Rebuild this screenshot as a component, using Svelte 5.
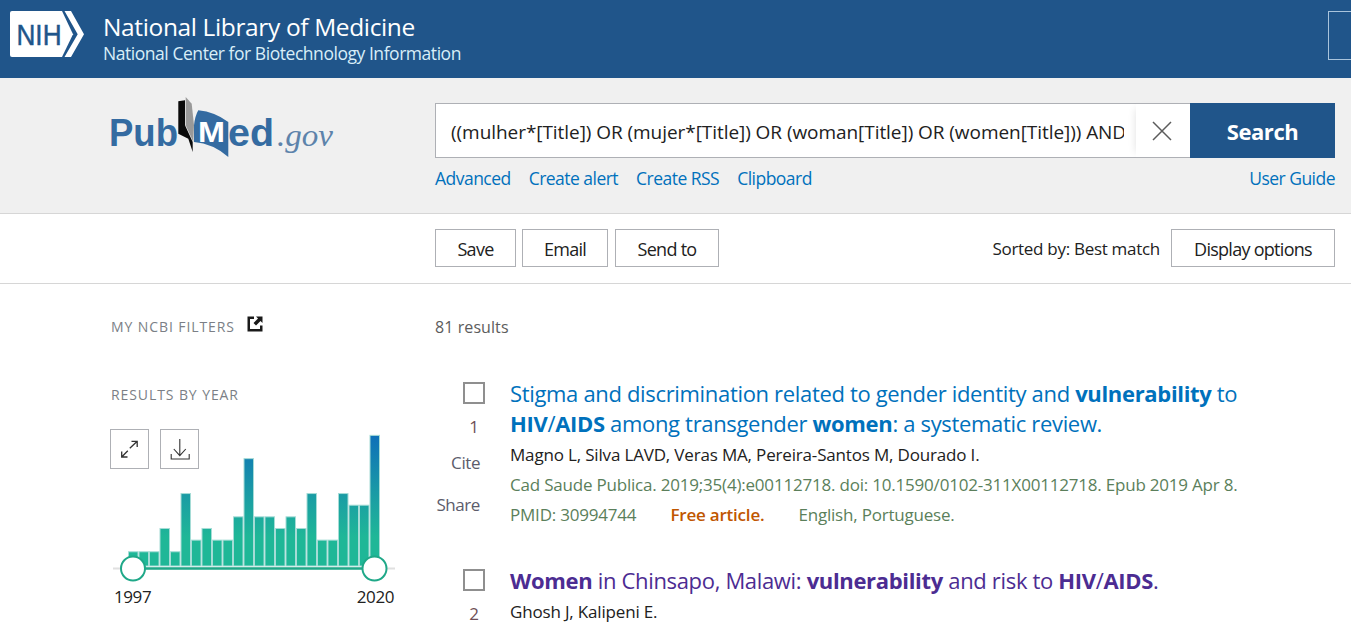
<script>
	const years = [1, 1, 1, 3, 1, 6, 2, 3, 2, 2, 4, 9, 4, 4, 3, 4, 3, 6, 2, 2, 6, 5, 5, 11];
	const baseY = 137;
	const barHeight = (n) => n * 11.64 + 2.6;

	const results = [
		{
			num: 1,
			visited: false,
			title: [
				['Stigma and discrimination related to gender identity and ', false],
				['vulnerability', true],
				[' to ', false],
				['HIV', true],
				['/', false],
				['AIDS', true],
				[' among transgender ', false],
				['women', true],
				[': a systematic review.', false]
			],
			authors: 'Magno L, Silva LAVD, Veras MA, Pereira-Santos M, Dourado I.',
			citation: 'Cad Saude Publica. 2019;35(4):e00112718. doi: 10.1590/0102-311X00112718. Epub 2019 Apr 8.',
			pmid: '30994744',
			free: true,
			lang: 'English, Portuguese.'
		},
		{
			num: 2,
			visited: true,
			title: [
				['Women', true],
				[' in Chinsapo, Malawi: ', false],
				['vulnerability', true],
				[' and risk to ', false],
				['HIV', true],
				['/', false],
				['AIDS', true],
				['.', false]
			],
			authors: 'Ghosh J, Kalipeni E.',
			citation: 'SAHARA J. 2005 Nov;2(3):320-32. doi: 10.1080/17290376.2005.9724857.'
		}
	];
</script>

<div class="page">
	<header class="ncbi">
		<svg class="nih" width="75" height="48" viewBox="0 0 75 48" aria-label="NIH">
			<path d="M2 1H52L63 24.300L52 47H2Q0 47 0 45V3Q0 1 2 1Z" fill="#fff" />
			<path d="M54.500 1H61L74 24.300L61 47H54.500L67.700 24.300Z" fill="#fff" />
			<text x="6.500" y="35" class="nih-text" textLength="45" lengthAdjust="spacingAndGlyphs">NIH</text>
		</svg>
		<div class="ncbi-names">
			<div class="nlm">National Library of Medicine</div>
			<div class="center">National Center for Biotechnology Information</div>
		</div>
		<div class="account"></div>
	</header>

	<section class="search-band">
		<svg class="logo" width="225" height="66" viewBox="0 0 225 66" aria-label="PubMed.gov">
			<text x="-1" y="50" class="logo-word" textLength="69" lengthAdjust="spacingAndGlyphs">Pub</text>
			<path d="M75.700 1L81.700 7.700L84 29.300L83.300 46L75.700 29.300Z" fill="#999" />
			<path d="M68.300 5.300L75 4.300V29.300L82.700 46V56L78.300 42.700L68.300 37.700Z" fill="#0a0a0a" />
			<path d="M84 29.300Q85 20 88.300 14.300Q105 16 118.300 26V61Q103.300 47.700 84 46Z" fill="#346ba1" />
			<text x="88" y="46" class="logo-m" textLength="27" lengthAdjust="spacingAndGlyphs">M</text>
			<text x="118" y="50" class="logo-word" textLength="46" lengthAdjust="spacingAndGlyphs">ed</text>
			<text x="167" y="50" class="logo-gov" textLength="56" lengthAdjust="spacingAndGlyphs">.gov</text>
		</svg>
		<div class="search-main">
			<div class="search-form">
				<div class="term">
					<div class="term-text">((mulher*[Title]) OR (mujer*[Title]) OR (woman[Title]) OR (women[Title])) AND (vulnerability[Title])</div>
				</div>
				<div class="clear">
					<svg width="20" height="20" viewBox="0 0 20 20">
						<path d="M1 1L19 19M19 1L1 19" stroke="#5b5b5b" stroke-width="1.500" fill="none" />
					</svg>
				</div>
				<div class="search-btn">Search</div>
			</div>
			<nav class="links">
				<a href="#advanced">Advanced</a>
				<a href="#alert">Create alert</a>
				<a href="#rss">Create RSS</a>
				<a href="#clipboard">Clipboard</a>
				<a class="guide" href="#guide">User Guide</a>
			</nav>
		</div>
	</section>

	<section class="actions">
		<div></div>
		<div class="actions-row">
			<button class="save">Save</button>
			<button class="email">Email</button>
			<button class="send">Send to</button>
			<span class="sorted">Sorted by: Best match</span>
			<button class="display">Display options</button>
		</div>
	</section>

	<section class="content">
		<aside class="side">
			<div class="side-title filters">
				MY NCBI FILTERS
				<svg width="16" height="16" viewBox="0 0 16 16">
					<path d="M0.500 0.500H7V3H3V13H13V9.500H15.500V15.500H0.500Z" fill="#1a1a1a" />
					<path d="M9 0.500H15.500V7L13.500 5L9 9.500L6.500 7L11 2.500Z" fill="#1a1a1a" />
				</svg>
			</div>
			<div class="side-title year-title">RESULTS BY YEAR</div>
			<div class="timeline">
				<div class="tools">
					<button class="tool" aria-label="Expand">
						<svg width="18" height="18" viewBox="0 0 18 18">
							<path d="M8.800 8.300L15.700 1.800M10.500 1.300H16.200V7M6.800 10.700L1.200 16.500M0.700 11.500V17H6.500" stroke="#333" stroke-width="1.300" fill="none" />
						</svg>
					</button>
					<button class="tool" aria-label="Download">
						<svg width="20" height="22" viewBox="0 0 20 22">
							<path d="M9.800 1V17.500M3.800 11L9.800 17.700L15.800 11M1.200 16V21H19.200V16" stroke="#333" stroke-width="1.100" fill="none" />
						</svg>
					</button>
				</div>
				<svg class="chart" width="285" height="156" viewBox="0 0 285 156">
					<defs>
						<linearGradient id="barfill" gradientUnits="userSpaceOnUse" x1="0" y1="7" x2="0" y2="137">
							<stop offset="0" stop-color="#0e70b8" />
							<stop offset="0.44" stop-color="#1a9ba5" />
							<stop offset="0.78" stop-color="#1fb797" />
							<stop offset="1" stop-color="#1fb797" />
						</linearGradient>
					</defs>
					{#each years as n, i}
						<rect
							x={18.5 + i * 10.5}
							y={baseY - barHeight(n)}
							width="9.500"
							height={barHeight(n)}
							fill="url(#barfill)"
							stroke="#a5dcd6"
							stroke-width="1"
						/>
					{/each}
					<path d="M3 139.500H285" stroke="#e0e0e0" stroke-width="2" />
					<path d="M23 139.500H265" stroke="#1fa888" stroke-width="2.500" />
					<circle cx="23" cy="139.500" r="12" fill="#fff" stroke="#1fa888" stroke-width="2" />
					<circle cx="264.500" cy="139.500" r="12" fill="#fff" stroke="#1fa888" stroke-width="2" />
				</svg>
				<div class="range"><span>1997</span><span>2020</span></div>
			</div>
		</aside>

		<main class="results">
			<div class="count">81 results</div>
			{#each results as r}
				<article class="result">
					<div class="result-side">
						<span class="check"></span>
						<span class="num">{r.num}</span>
						{#if r.num === 1}
							<span class="cite">Cite</span>
							<span class="share">Share</span>
						{/if}
					</div>
					<div class="result-body">
						<a class="title" class:visited={r.visited} href="#r{r.num}">
							{#each r.title as [text, hit]}{#if hit}<b>{text}</b>{:else}{text}{/if}{/each}
						</a>
						<div class="authors">{r.authors}</div>
						<div class="citation">{r.citation}</div>
						{#if r.pmid}
							<div class="citation meta">
								<span class="pmid">PMID: {r.pmid}</span>
								<b class="free">Free article.</b>
								<span>{r.lang}</span>
							</div>
						{/if}
					</div>
				</article>
			{/each}
		</main>
	</section>
</div>

<style>
	:global(body) {
		overflow: hidden;
	}

	.page {
		height: 636px;
		overflow: hidden;
		background: #fff;
		font-family: "Open Sans", "Noto Sans", sans-serif;
		font-size: 17px;
		letter-spacing: -0.025em;
		color: #212121;
	}

	.ncbi {
		display: flex;
		height: 78px;
		box-sizing: border-box;
		padding: 10px 0 0 10px;
		background: #20558a;
		color: #fff;
	}

	.nih-text {
		font-family: "Liberation Sans", sans-serif;
		font-size: 30px;
		fill: #20558a;
		stroke: #20558a;
		stroke-width: 0.5;
		letter-spacing: 0;
	}

	.ncbi-names {
		margin-left: 18px;
	}

	.nlm {
		font-size: 24.5px;
		letter-spacing: -0.015em;
		line-height: 34px;
	}

	.center {
		margin-top: -1px;
		font-size: 17.5px;
		letter-spacing: -0.026em;
		line-height: 20px;
		color: #d8eef8;
	}

	.account {
		box-sizing: border-box;
		width: 23px;
		height: 49px;
		margin: 1px 0 0 auto;
		border: 1px solid #a9c4dc;
		border-right: 0;
	}

	.search-band {
		display: grid;
		grid-template-columns: 325px minmax(0, 1fr);
		height: 136px;
		box-sizing: border-box;
		padding: 0 16px 0 110px;
		background: #f0f0f0;
		border-bottom: 1px solid #d6d6d6;
	}

	.logo {
		margin-top: 18px;
	}

	.logo-word {
		font-family: "Liberation Sans", sans-serif;
		font-weight: 700;
		font-size: 38px;
		fill: #346ba1;
		letter-spacing: 0;
	}

	.logo-m {
		font-family: "Liberation Sans", sans-serif;
		font-weight: 700;
		font-size: 29.5px;
		fill: #fff;
		letter-spacing: 0;
	}

	.logo-gov {
		font-family: "Liberation Serif", serif;
		font-style: italic;
		font-size: 32px;
		fill: #5d83ab;
		letter-spacing: 0;
	}

	.search-main {
		padding-top: 25px;
	}

	.search-form {
		display: flex;
		height: 55px;
	}

	.term {
		flex: 1;
		min-width: 0;
		box-sizing: border-box;
		padding: 0 12px 0 15px;
		background: #fff;
		border: 1px solid #aeb0b5;
		border-right: 0;
	}

	.term-text {
		overflow: hidden;
		white-space: nowrap;
		line-height: 57px;
		font-size: 19px;
		letter-spacing: -0.003em;
		color: #212121;
	}

	.clear {
		display: flex;
		align-items: center;
		justify-content: center;
		width: 54px;
		box-sizing: border-box;
		padding-right: 2px;
		background: #fff;
		border-top: 1px solid #aeb0b5;
		border-bottom: 1px solid #aeb0b5;
		box-shadow: -6px 0 8px -6px rgba(0, 0, 0, 0.12);
	}

	.search-btn {
		width: 145px;
		text-align: center;
		line-height: 57px;
		font-size: 22px;
		font-weight: 700;
		color: #fff;
		background: #20558a;
	}

	.links {
		display: flex;
		gap: 18px;
		margin-top: 8px;
		font-size: 17.5px;
		letter-spacing: -0.03em;
		line-height: 24px;
	}

	.links a {
		color: #0071bc;
		text-decoration: none;
	}

	.links .guide {
		margin-left: auto;
	}

	.actions {
		display: grid;
		grid-template-columns: 325px minmax(0, 1fr);
		height: 70px;
		box-sizing: border-box;
		padding: 15px 16px 0 110px;
		border-bottom: 1px solid #d6d6d6;
	}

	.actions-row {
		display: flex;
		align-items: flex-start;
		gap: 6px;
	}

	button {
		box-sizing: border-box;
		height: 38px;
		padding: 2px 0 0;
		font: inherit;
		font-size: 18px;
		letter-spacing: -0.04em;
		color: #212121;
		background: #fff;
		border: 1px solid #aeb0b5;
	}

	.save {
		width: 81px;
	}

	.email {
		width: 86px;
	}

	.send {
		width: 104px;
		margin-left: 1px;
	}

	.sorted {
		margin-left: auto;
		margin-right: 5px;
		font-size: 17px;
		letter-spacing: -0.017em;
		line-height: 40px;
	}

	.display {
		width: 164px;
	}

	.content {
		display: grid;
		grid-template-columns: 325px minmax(0, 1fr);
		padding: 0 16px 0 110px;
	}

	.side-title {
		padding-left: 1px;
		font-size: 14px;
		letter-spacing: 0.065em;
		line-height: 20px;
		color: #7b7f86;
	}

	.filters {
		display: flex;
		align-items: center;
		gap: 12px;
		margin-top: 33px;
	}

	.filters svg {
		margin-top: -6px;
	}

	.year-title {
		margin-top: 48px;
	}

	.timeline {
		position: relative;
		width: 285px;
		margin-top: 24px;
	}

	.tools {
		position: absolute;
		top: 0;
		left: 0;
		display: flex;
		gap: 11px;
	}

	.tool {
		display: flex;
		align-items: center;
		justify-content: center;
		width: 39px;
		height: 40px;
		padding: 0;
	}

	.chart {
		display: block;
	}

	.range {
		display: flex;
		justify-content: space-between;
		width: 280px;
		margin: 0 0 0 4px;
		font-size: 17px;
		line-height: 24px;
	}

	.count {
		margin-top: 32px;
		font-size: 16px;
		letter-spacing: 0.005em;
		line-height: 22px;
		color: #5c5c5c;
	}

	.result {
		display: grid;
		grid-template-columns: 75px minmax(0, 1fr);
		margin-top: 40px;
	}

	.result + .result {
		margin-top: 38px;
	}

	.result-side {
		display: flex;
		flex-direction: column;
		align-items: flex-end;
		padding: 4px 30px 0 0;
		color: #5c5c6b;
	}

	.check {
		box-sizing: border-box;
		width: 22px;
		height: 22px;
		margin-right: -5px;
		background: #fff;
		border: 2px solid #8f8f8f;
	}

	.num {
		width: 22px;
		margin: 11px -5px 0 0;
		text-align: center;
		line-height: 24px;
		color: #6e4f56;
	}

	.cite {
		margin-top: 12px;
		line-height: 24px;
	}

	.share {
		margin-top: 18px;
		line-height: 24px;
	}

	.title {
		display: block;
		max-width: 740px;
		font-size: 22px;
		letter-spacing: -0.015em;
		line-height: 30px;
		color: #0071bc;
		text-decoration: none;
	}

	.title.visited {
		color: #4c2c92;
	}

	.authors {
		margin-top: 5px;
		letter-spacing: -0.01em;
		line-height: 24px;
	}

	.citation {
		margin-top: 6px;
		letter-spacing: -0.012em;
		line-height: 24px;
		color: #5b7f5b;
	}

	.meta {
		display: flex;
	}

	.pmid {
		margin-right: 34px;
	}

	.free {
		margin-right: 34px;
		font-weight: 600;
		color: #c05600;
	}
</style>
